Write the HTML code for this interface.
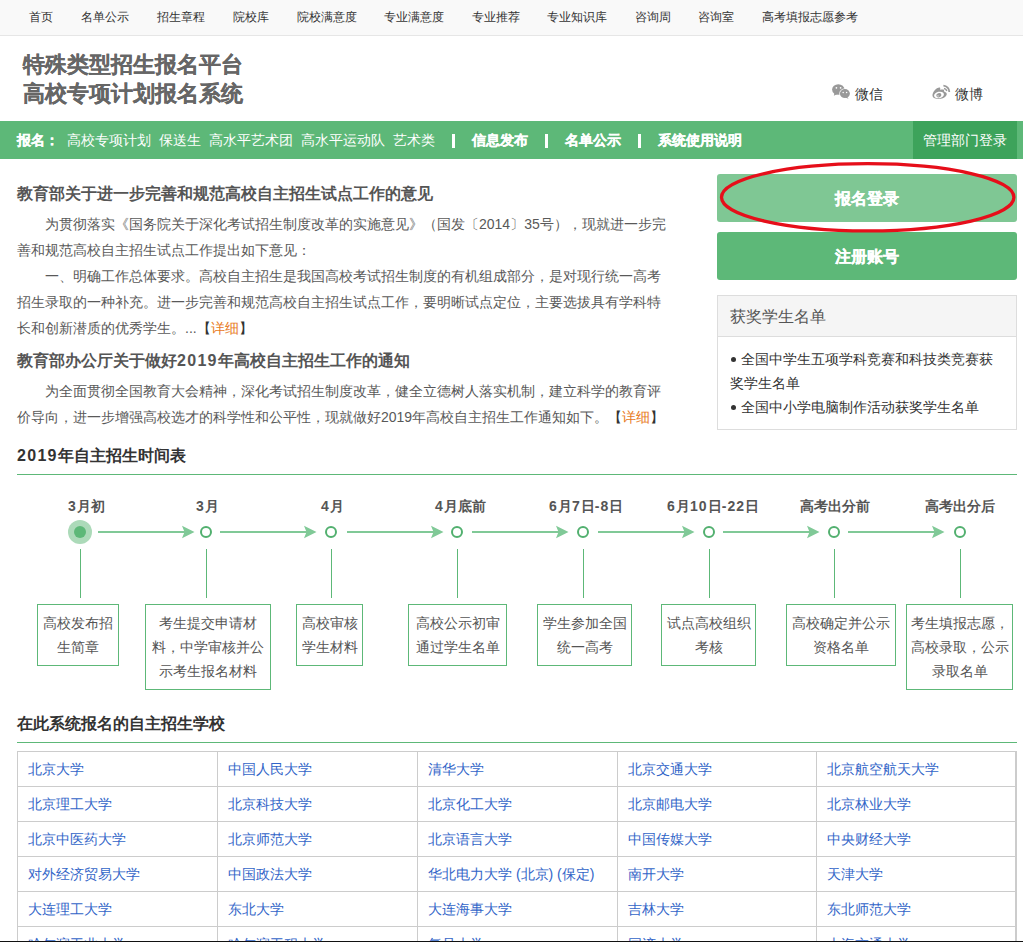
<!DOCTYPE html>
<html><head><meta charset="utf-8">
<style>
*{margin:0;padding:0;box-sizing:border-box}
html,body{width:1023px;height:942px;overflow:hidden;background:#fff}
body{position:relative;font-family:"Liberation Sans",sans-serif;color:#333}
.abs{position:absolute;white-space:nowrap}
#topnav{position:absolute;left:0;top:0;width:1023px;height:36px;background:#f9f9f9;border-bottom:1px solid #e6e6e6}
#topnav span{position:absolute;top:9px;font-size:12px;line-height:16px;color:#333}
.title{font-size:22px;font-weight:bold;color:#666;line-height:29px;-webkit-text-stroke:0.15px #666}
#gbar{position:absolute;left:0;top:121px;width:1023px;height:38px;background:#5db878}
#gbar span{position:absolute;top:11px;font-size:14px;line-height:16px;color:#fff}
#gbar b{position:absolute;top:11px;font-size:14px;line-height:16px;color:#fff}
.sep{position:absolute;top:13px;width:3px;height:14px;background:#fff}
#gbar b{-webkit-text-stroke:0.25px #fff}
#admin{position:absolute;left:913px;top:0;width:104px;height:38px;background:#3da35b}
.h2{font-size:16px;font-weight:bold;color:#555;line-height:20px}
.p{font-size:14px;color:#595959;line-height:26px}
.or{color:#e87b1e}
.btn{position:absolute;left:717px;width:300px;height:48px;border-radius:3px;color:#fff;font-size:16px;font-weight:bold;text-align:center;line-height:47px;padding-top:1px;-webkit-text-stroke:0.3px #fff}
#award{position:absolute;left:717px;top:295px;width:300px;height:135px;border:1px solid #ddd}
#award .hd{height:41px;background:#f5f5f5;border-bottom:1px solid #ddd}
.sec{font-size:16px;font-weight:bold;color:#333;line-height:20px}
.gline{position:absolute;left:17px;width:1000px;height:1px;background:#5db878}
.lbl{position:absolute;top:498px;font-size:14px;font-weight:bold;color:#555;line-height:16px;white-space:nowrap}
.vl{position:absolute;top:549px;width:1px;height:49px;background:#5db878}
.ring{position:absolute;top:526px;width:12px;height:12px;border:2px solid #5db878;border-radius:50%;background:#fff}
.box{position:absolute;top:604px;border:1px solid #5db878;font-size:14px;color:#555;line-height:24px;text-align:center;white-space:nowrap;padding:6px 0}
.arr{position:absolute;top:531px;height:2px;background:#7fca95}
.arr:after{content:"";position:absolute;right:-1px;top:-5px;border-left:12px solid #7fca95;border-top:6px solid transparent;border-bottom:6px solid transparent}
table{position:absolute;left:17px;top:751px;border-collapse:collapse;width:998px;table-layout:fixed}
td{border:1px solid #ccc;height:35px;font-size:14px;color:#3265c8;padding:0 0 0 10px;white-space:nowrap;overflow:hidden;line-height:20px}
#tbr{position:absolute;left:1016px;top:751px;width:1px;height:191px;background:#ccc}
#bottomline{position:absolute;left:0;top:941px;width:1023px;height:1px;background:#111}
.d16{letter-spacing:1.3px}.d14{letter-spacing:1.1px}
</style></head><body>
<div id="topnav">
<span style="left:29px">首页</span>
<span style="left:81px">名单公示</span>
<span style="left:157px">招生章程</span>
<span style="left:233px">院校库</span>
<span style="left:297px">院校满意度</span>
<span style="left:384px">专业满意度</span>
<span style="left:472px">专业推荐</span>
<span style="left:547px">专业知识库</span>
<span style="left:635px">咨询周</span>
<span style="left:698px">咨询室</span>
<span style="left:762px">高考填报志愿参考</span>
</div>

<div class="abs title" style="left:23px;top:50px">特殊类型招生报名平台</div>
<div class="abs title" style="left:23px;top:79px">高校专项计划报名系统</div>

<svg class="abs" style="left:832px;top:84px" width="19" height="16" viewBox="0 0 19 16">
<ellipse cx="6.3" cy="5.5" rx="6.2" ry="5.3" fill="#999"/><path d="M2.5 9 L1.8 11.8 L5.5 10 Z" fill="#999"/>
<circle cx="4.4" cy="3.8" r="0.85" fill="#fff"/><circle cx="8.6" cy="3.8" r="0.85" fill="#fff"/>
<ellipse cx="12.9" cy="9.6" rx="5.6" ry="5.0" fill="#fff"/>
<ellipse cx="12.9" cy="9.6" rx="5.0" ry="4.5" fill="#999"/><path d="M15 12.8 L16.6 14.8 L13.2 13.6Z" fill="#999"/>
<circle cx="11.2" cy="8.5" r="0.75" fill="#fff"/><circle cx="14.6" cy="8.5" r="0.75" fill="#fff"/>
</svg>
<div class="abs" style="left:855px;top:86px;font-size:14px;line-height:16px;color:#333">微信</div>
<svg class="abs" style="left:932px;top:84px" width="19" height="16" viewBox="0 0 19 16">
<path d="M0.6 12.3 C0 9.8 2 6.3 5 4.3 C7 3 8.6 3 8.2 4.9 C8 5.7 8.6 5.9 9.6 5.6 C11.2 5.1 12.3 5.5 12 6.8 C11.9 7.4 12.4 7.6 13.1 7.9 C15.1 8.7 15.3 10.2 14 12.1 C12.6 14 9.6 15 6.6 15 C3.5 15 1.1 14 0.6 12.3Z" fill="#999"/>
<ellipse cx="7" cy="11" rx="5" ry="3.2" transform="rotate(-12 7 11)" fill="#fff"/>
<ellipse cx="6.8" cy="11.2" rx="2.6" ry="2.1" transform="rotate(-20 6.8 11.2)" fill="#999"/>
<circle cx="6" cy="11.9" r="0.6" fill="#fff"/>
<path d="M11.4 1.6 A6.2 6.2 0 0 1 17.3 8" stroke="#999" stroke-width="1.8" fill="none"/>
<path d="M12 4.5 A3.4 3.4 0 0 1 14.8 7" stroke="#999" stroke-width="1.5" fill="none"/>
</svg>
<div class="abs" style="left:955px;top:86px;font-size:14px;line-height:16px;color:#333">微博</div>

<div id="gbar">
<b style="left:17px">报名：</b>
<span style="left:67px">高校专项计划</span>
<span style="left:159px">保送生</span>
<span style="left:209px">高水平艺术团</span>
<span style="left:301px">高水平运动队</span>
<span style="left:393px">艺术类</span>
<i class="sep" style="left:452px"></i>
<b style="left:472px">信息发布</b>
<i class="sep" style="left:545px"></i>
<b style="left:565px">名单公示</b>
<i class="sep" style="left:638px"></i>
<b style="left:658px">系统使用说明</b>
<div id="admin"><span style="left:10px">管理部门登录</span></div>
</div>

<div class="abs h2" style="left:17px;top:184px">教育部关于进一步完善和规范高校自主招生试点工作的意见</div>
<div class="abs p" style="left:17px;top:211px">
<div style="padding-left:28px">为贯彻落实《国务院关于深化考试招生制度改革的实施意见》（国发〔2014〕35号），现就进一步完</div>
<div>善和规范高校自主招生试点工作提出如下意见：</div>
<div style="padding-left:28px">一、明确工作总体要求。高校自主招生是我国高校考试招生制度的有机组成部分，是对现行统一高考</div>
<div>招生录取的一种补充。进一步完善和规范高校自主招生试点工作，要明晰试点定位，主要选拔具有学科特</div>
<div>长和创新潜质的优秀学生。...<span style="color:#333">【</span><span class="or">详细</span><span style="color:#333">】</span></div>
</div>
<div class="abs h2" style="left:17px;top:351px">教育部办公厅关于做好<span class="d16">2019</span>年高校自主招生工作的通知</div>
<div class="abs p" style="left:17px;top:378px">
<div style="padding-left:28px">为全面贯彻全国教育大会精神，深化考试招生制度改革，健全立德树人落实机制，建立科学的教育评</div>
<div>价导向，进一步增强高校选才的科学性和公平性，现就做好2019年高校自主招生工作通知如下。<span style="color:#333">【</span><span class="or">详细</span><span style="color:#333">】</span></div>
</div>

<div class="btn" style="top:174px;background:#7fc794">报名登录</div>
<div class="btn" style="top:232px;background:#5db878">注册账号</div>
<svg class="abs" style="left:700px;top:150px" width="323" height="100">
<ellipse cx="867.7" cy="197.3" rx="146.2" ry="33.6" transform="translate(-700,-150)" fill="none" stroke="#e60e1a" stroke-width="3.3"/>
</svg>

<div id="award">
<div class="hd"><div class="abs" style="left:12px;top:12px;font-size:16px;line-height:18px;color:#555">获奖学生名单</div></div>
<div class="abs" style="left:12px;top:51px;font-size:14px;line-height:24px;color:#333">
<div style="padding-left:11px">全国中学生五项学科竞赛和科技类竞赛获</div>
<div>奖学生名单</div>
<div style="padding-left:11px">全国中小学电脑制作活动获奖学生名单</div>
</div>
<div class="abs" style="left:13px;top:61px;width:5px;height:5px;border-radius:50%;background:#333"></div>
<div class="abs" style="left:13px;top:109px;width:5px;height:5px;border-radius:50%;background:#333"></div>
</div>

<div class="abs sec" style="left:17px;top:446px"><span class="d16">2019</span>年自主招生时间表</div>
<div class="gline" style="top:474px"></div>

<div class="lbl" style="left:68px"><span class="d14">3</span>月初</div>
<div class="lbl" style="left:196px"><span class="d14">3</span>月</div>
<div class="lbl" style="left:321px"><span class="d14">4</span>月</div>
<div class="lbl" style="left:435px"><span class="d14">4</span>月底前</div>
<div class="lbl" style="left:549px"><span class="d14">6</span>月<span class="d14">7</span>日<span class="d14">-8</span>日</div>
<div class="lbl" style="left:667px"><span class="d14">6</span>月<span class="d14">10</span>日<span class="d14">-22</span>日</div>
<div class="lbl" style="left:800px">高考出分前</div>
<div class="lbl" style="left:925px">高考出分后</div>

<svg class="abs" style="left:0;top:500px" width="1023" height="110" viewBox="0 500 1023 110">
<circle cx="80" cy="532" r="12" fill="#acdab9"/><circle cx="80" cy="532" r="6" fill="#5db878"/>
<circle cx="206" cy="532" r="5" fill="#fff" stroke="#52b06f" stroke-width="2"/>
<circle cx="331" cy="532" r="5" fill="#fff" stroke="#52b06f" stroke-width="2"/>
<circle cx="457" cy="532" r="5" fill="#fff" stroke="#52b06f" stroke-width="2"/>
<circle cx="583" cy="532" r="5" fill="#fff" stroke="#52b06f" stroke-width="2"/>
<circle cx="709" cy="532" r="5" fill="#fff" stroke="#52b06f" stroke-width="2"/>
<circle cx="834" cy="532" r="5" fill="#fff" stroke="#52b06f" stroke-width="2"/>
<circle cx="960" cy="532" r="5" fill="#fff" stroke="#52b06f" stroke-width="2"/>
<rect x="98" y="531" width="87" height="2" fill="#80c997"/><path d="M194.5 532 L182 525.8 L184.5 532 L182 538.2Z" fill="#80c997"/>
<rect x="220" y="531" width="87" height="2" fill="#80c997"/><path d="M316.5 532 L304 525.8 L306.5 532 L304 538.2Z" fill="#80c997"/>
<rect x="347" y="531" width="87" height="2" fill="#80c997"/><path d="M443.5 532 L431 525.8 L433.5 532 L431 538.2Z" fill="#80c997"/>
<rect x="472" y="531" width="87" height="2" fill="#80c997"/><path d="M568.5 532 L556 525.8 L558.5 532 L556 538.2Z" fill="#80c997"/>
<rect x="598" y="531" width="87" height="2" fill="#80c997"/><path d="M694.5 532 L682 525.8 L684.5 532 L682 538.2Z" fill="#80c997"/>
<rect x="723" y="531" width="87" height="2" fill="#80c997"/><path d="M819.5 532 L807 525.8 L809.5 532 L807 538.2Z" fill="#80c997"/>
<rect x="848" y="531" width="87" height="2" fill="#80c997"/><path d="M944.5 532 L932 525.8 L934.5 532 L932 538.2Z" fill="#80c997"/>
<rect x="80" y="549" width="1" height="49" fill="#5db878"/>
<rect x="206" y="549" width="1" height="49" fill="#5db878"/>
<rect x="331" y="549" width="1" height="49" fill="#5db878"/>
<rect x="457" y="549" width="1" height="49" fill="#5db878"/>
<rect x="583" y="549" width="1" height="49" fill="#5db878"/>
<rect x="709" y="549" width="1" height="49" fill="#5db878"/>
<rect x="834" y="549" width="1" height="49" fill="#5db878"/>
<rect x="960" y="549" width="1" height="49" fill="#5db878"/>
</svg>
<div class="box" style="left:37px;width:82px">高校发布招<br>生简章</div>
<div class="box" style="left:145px;width:126px">考生提交申请材<br>料，中学审核并公<br>示考生报名材料</div>
<div class="box" style="left:296px;width:67px">高校审核<br>学生材料</div>
<div class="box" style="left:408px;width:99px">高校公示初审<br>通过学生名单</div>
<div class="box" style="left:537px;width:95px">学生参加全国<br>统一高考</div>
<div class="box" style="left:661px;width:95px">试点高校组织<br>考核</div>
<div class="box" style="left:786px;width:110px">高校确定并公示<br>资格名单</div>
<div class="box" style="left:906px;width:107px">考生填报志愿，<br>高校录取，公示<br>录取名单</div>

<div class="abs sec" style="left:17px;top:714px">在此系统报名的自主招生学校</div>
<div class="gline" style="top:742px"></div>

<table><colgroup><col style="width:200px"><col style="width:200px"><col style="width:200px"><col style="width:199px"><col style="width:199px"></colgroup>
<tr><td>北京大学</td><td>中国人民大学</td><td>清华大学</td><td>北京交通大学</td><td>北京航空航天大学</td></tr>
<tr><td>北京理工大学</td><td>北京科技大学</td><td>北京化工大学</td><td>北京邮电大学</td><td>北京林业大学</td></tr>
<tr><td>北京中医药大学</td><td>北京师范大学</td><td>北京语言大学</td><td>中国传媒大学</td><td>中央财经大学</td></tr>
<tr><td>对外经济贸易大学</td><td>中国政法大学</td><td>华北电力大学 (北京) (保定)</td><td>南开大学</td><td>天津大学</td></tr>
<tr><td>大连理工大学</td><td>东北大学</td><td>大连海事大学</td><td>吉林大学</td><td>东北师范大学</td></tr>
<tr><td>哈尔滨工业大学</td><td>哈尔滨工程大学</td><td>复旦大学</td><td>同济大学</td><td>上海交通大学</td></tr>
</table>
<div id="tbr"></div>
<div id="bottomline"></div>
</body></html>
